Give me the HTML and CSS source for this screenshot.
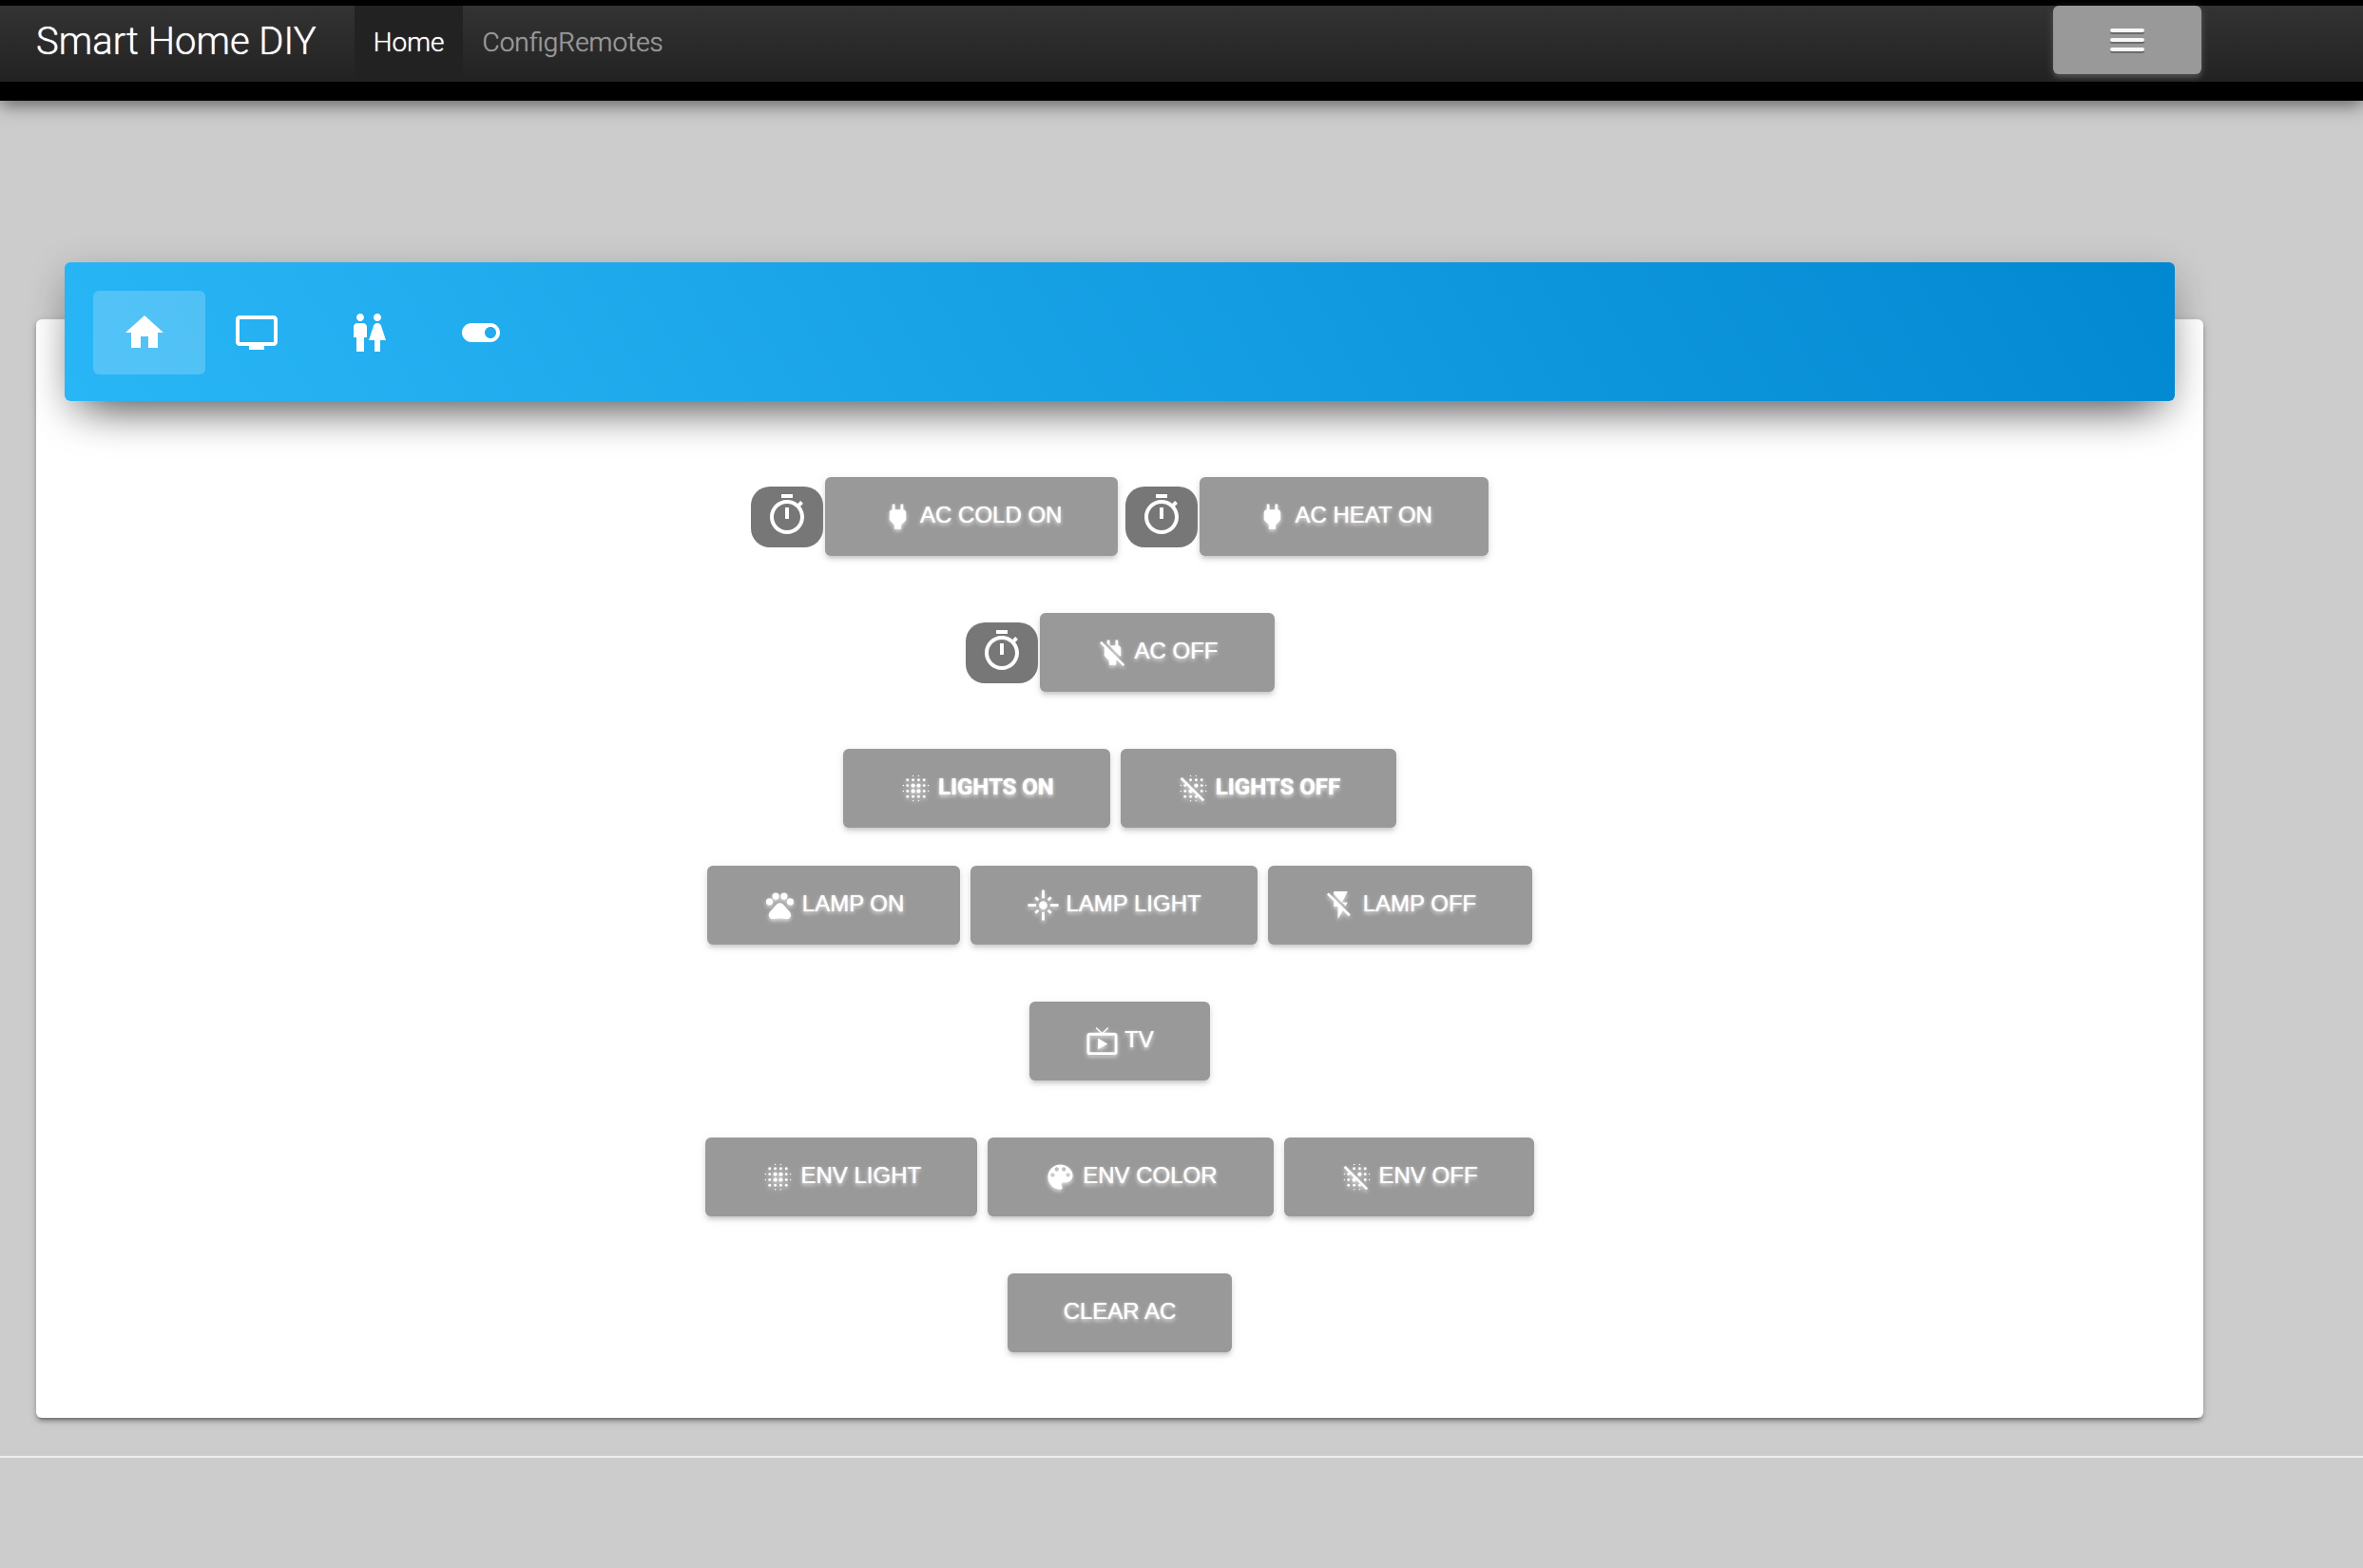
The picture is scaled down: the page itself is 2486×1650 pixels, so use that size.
FILE: index.html
```html
<!DOCTYPE html>
<html lang="en">
<head>
<meta charset="utf-8">
<title>Smart Home DIY</title>
<link rel="stylesheet" href="styles.css">
</head>
<body>
<svg class="sprite" aria-hidden="true">
  <symbol id="timer" viewBox="0 0 24 24"><path d="M15 1H9v2h6V1zm-4 13h2V8h-2v6zm8.03-6.61l1.42-1.42c-.43-.51-.9-.99-1.41-1.41l-1.42 1.42C16.07 4.74 14.12 4 12 4c-4.97 0-9 4.03-9 9s4.02 9 9 9 9-4.03 9-9c0-2.12-.74-4.07-1.97-5.61zM12 20c-3.87 0-7-3.13-7-7s3.13-7 7-7 7 3.13 7 7-3.13 7-7 7z"/></symbol>
  <symbol id="power" viewBox="0 0 24 24"><path d="M16.01 7L16 3h-2v4h-4V3H8v4h-.01C7 6.99 6 7.99 6 8.99v5.49L9.5 18v3h5v-3l3.5-3.51v-5.5c0-1-1-2-1.99-1.99z"/></symbol>
  <symbol id="blur-on" viewBox="0 0 24 24">
    <g><circle cx="10" cy="10" r="1.5"/><circle cx="14" cy="10" r="1.5"/><circle cx="10" cy="14" r="1.5"/><circle cx="14" cy="14" r="1.5"/></g>
    <g><circle cx="6" cy="6" r="1"/><circle cx="10" cy="6" r="1"/><circle cx="14" cy="6" r="1"/><circle cx="18" cy="6" r="1"/><circle cx="6" cy="10" r="1"/><circle cx="18" cy="10" r="1"/><circle cx="6" cy="14" r="1"/><circle cx="18" cy="14" r="1"/><circle cx="6" cy="18" r="1"/><circle cx="10" cy="18" r="1"/><circle cx="14" cy="18" r="1"/><circle cx="18" cy="18" r="1"/></g>
    <g><circle cx="10" cy="3" r=".5"/><circle cx="14" cy="3" r=".5"/><circle cx="3" cy="10" r=".5"/><circle cx="3" cy="14" r=".5"/><circle cx="21" cy="10" r=".5"/><circle cx="21" cy="14" r=".5"/><circle cx="10" cy="21" r=".5"/><circle cx="14" cy="21" r=".5"/></g>
  </symbol>
  <symbol id="blur-off" viewBox="0 0 24 24">
    <path d="M3.77 4L2.5 5.27 18.73 21.5 20 20.23z"/>
    <g><circle cx="14" cy="10" r="1.5"/><circle cx="10" cy="14" r="1.5"/></g>
    <g><circle cx="10" cy="6" r="1"/><circle cx="14" cy="6" r="1"/><circle cx="18" cy="6" r="1"/><circle cx="6" cy="10" r="1"/><circle cx="18" cy="10" r="1"/><circle cx="6" cy="14" r="1"/><circle cx="18" cy="14" r="1"/><circle cx="6" cy="18" r="1"/><circle cx="10" cy="18" r="1"/><circle cx="14" cy="18" r="1"/></g>
    <g><circle cx="10" cy="3" r=".5"/><circle cx="14" cy="3" r=".5"/><circle cx="3" cy="10" r=".5"/><circle cx="3" cy="14" r=".5"/><circle cx="21" cy="10" r=".5"/><circle cx="21" cy="14" r=".5"/><circle cx="10" cy="21" r=".5"/><circle cx="14" cy="21" r=".5"/></g>
  </symbol>
</svg>

<nav class="navbar">
  <a class="brand" href="#">Smart Home DIY</a>
  <a class="nav-link active" href="#" aria-current="page">Home</a>
  <a class="nav-link" href="#">ConfigRemotes</a>
  <button class="toggler" type="button" aria-label="Toggle navigation"><span class="bar"></span><span class="bar"></span><span class="bar"></span></button>
</nav>

<main class="card">
  <div class="tabs">
    <button class="tab selected" type="button" aria-label="Home"><svg viewBox="0 0 24 24"><path d="M10 20v-6h4v6h5v-8h3L12 3 2 12h3v8z"/></svg></button>
    <button class="tab" type="button" aria-label="TV"><svg viewBox="0 0 24 24"><path d="M21 3H3c-1.1 0-2 .9-2 2v12c0 1.1.9 2 2 2h5v2h8v-2h5c1.1 0 1.99-.9 1.99-2L23 5c0-1.1-.9-2-2-2zm0 14H3V5h18v12z"/></svg></button>
    <button class="tab" type="button" aria-label="Bathroom"><svg viewBox="0 0 24 24"><path d="M5.5 22v-7.5H4V9c0-1.1.9-2 2-2h3c1.1 0 2 .9 2 2v5.5H9.5V22h-4zM18 22v-6h3l-2.54-7.63C18.18 7.55 17.42 7 16.56 7h-.12c-.86 0-1.63.55-1.9 1.37L12 16h3v6h3zM7.5 6c1.11 0 2-.89 2-2s-.89-2-2-2-2 .89-2 2 .89 2 2 2zm9 0c1.11 0 2-.89 2-2s-.89-2-2-2-2 .89-2 2 .89 2 2 2z"/></svg></button>
    <button class="tab" type="button" aria-label="Switches"><svg viewBox="0 0 24 24"><path d="M17 7H7c-2.76 0-5 2.24-5 5s2.24 5 5 5h10c2.76 0 5-2.24 5-5s-2.24-5-5-5zm0 8c-1.66 0-3-1.34-3-3s1.34-3 3-3 3 1.34 3 3-1.34 3-3 3z"/></svg></button>
  </div>

  <div class="controls">
    <div class="row timed">
      <div class="pair">
        <button class="timer" type="button" aria-label="AC cold timer"><svg><use href="#timer"/></svg></button>
        <button class="btn" type="button"><svg><use href="#power"/></svg>AC COLD ON</button>
      </div>
      <div class="pair">
        <button class="timer" type="button" aria-label="AC heat timer"><svg><use href="#timer"/></svg></button>
        <button class="btn" type="button"><svg><use href="#power"/></svg>AC HEAT ON</button>
      </div>
    </div>
    <div class="row timed">
      <div class="pair">
        <button class="timer" type="button" aria-label="AC off timer"><svg><use href="#timer"/></svg></button>
        <button class="btn" type="button"><svg viewBox="0 0 24 24"><path d="M18 14.49V9c0-1-1.01-2.01-2-2V3h-2v4h-4V3H8v2.48l9.51 9.5.49-.49zm-1.76 1.77L7.2 7.2l-.01.01L3.98 4 2.71 5.25l3.36 3.36C6.04 8.74 6 8.87 6 9v5.48L9.5 18v3h5v-3l.48-.48L19.45 22l1.26-1.28-4.47-4.46z"/></svg>AC OFF</button>
      </div>
    </div>
    <div class="row-group">
      <div class="row">
        <button class="btn strong" type="button"><svg><use href="#blur-on"/></svg>LIGHTS ON</button>
        <button class="btn strong" type="button"><svg><use href="#blur-off"/></svg>LIGHTS OFF</button>
      </div>
      <div class="row">
        <button class="btn" type="button"><svg viewBox="0 0 24 24"><circle cx="4.5" cy="9.5" r="2.5"/><circle cx="9" cy="5.5" r="2.5"/><circle cx="15" cy="5.5" r="2.5"/><circle cx="19.5" cy="9.5" r="2.5"/><path d="M17.34 14.86c-.87-1.02-1.6-1.89-2.48-2.91-.46-.54-1.05-1.08-1.75-1.32-.11-.04-.22-.07-.33-.09-.25-.04-.52-.04-.78-.04s-.53 0-.79.05c-.11.02-.22.05-.33.09-.7.24-1.28.78-1.75 1.32-.87 1.02-1.6 1.89-2.48 2.91-1.31 1.31-2.92 2.76-2.62 4.79.29 1.02 1.02 2.03 2.33 2.32.73.15 3.06-.44 5.54-.44h.18c2.48 0 4.81.58 5.54.44 1.31-.29 2.04-1.31 2.33-2.32.31-2.04-1.3-3.49-2.61-4.8z"/></svg>LAMP ON</button>
        <button class="btn" type="button"><svg viewBox="0 0 24 24"><path d="M7 11H1v2h6v-2zm2.17-3.24L7.05 5.64 5.64 7.05l2.12 2.12 1.41-1.41zM13 1h-2v6h2V1zm5.36 6.05l-1.41-1.41-2.12 2.12 1.41 1.41 2.12-2.12zM17 11v2h6v-2h-6zm-5-2c-1.66 0-3 1.34-3 3s1.34 3 3 3 3-1.34 3-3-1.34-3-3-3zm2.83 7.24l2.12 2.12 1.41-1.41-2.12-2.12-1.41 1.41zm-9.19.71l1.41 1.41 2.12-2.12-1.41-1.41-2.12 2.12zM11 23h2v-6h-2v6z"/></svg>LAMP LIGHT</button>
        <button class="btn" type="button"><svg viewBox="0 0 24 24"><path d="M3.27 3L2 4.27l5 5V13h3v9l3.58-6.14L17.73 20 19 18.73 3.27 3zM17 10h-4l4-8H7v2.18l8.46 8.46L17 10z"/></svg>LAMP OFF</button>
      </div>
    </div>
    <div class="row">
      <button class="btn" type="button"><svg viewBox="0 0 24 24"><path d="M21 6h-7.59l3.29-3.29L16 2l-4 4-4-4-.7.71L10.59 6H3c-1.1 0-2 .89-2 2v12c0 1.1.9 2 2 2h18c1.1 0 2-.9 2-2V8c0-1.11-.9-2-2-2zm0 14H3V8h18v12zM9 10v8l7-4z"/></svg>TV</button>
    </div>
    <div class="row">
      <button class="btn" type="button"><svg><use href="#blur-on"/></svg>ENV LIGHT</button>
      <button class="btn" type="button"><svg viewBox="0 0 24 24"><path d="M12 3c-4.97 0-9 4.03-9 9s4.03 9 9 9c.83 0 1.5-.67 1.5-1.5 0-.39-.15-.74-.39-1.01-.23-.26-.38-.61-.38-.99 0-.83.67-1.5 1.5-1.5H16c2.76 0 5-2.24 5-5 0-4.42-4.03-8-9-8zm-5.5 9c-.83 0-1.5-.67-1.5-1.5S5.67 9 6.5 9 8 9.67 8 10.5 7.33 12 6.5 12zm3-4C8.67 8 8 7.33 8 6.5S8.67 5 9.5 5s1.5.67 1.5 1.5S10.33 8 9.5 8zm5 0c-.83 0-1.5-.67-1.5-1.5S13.67 5 14.5 5s1.5.67 1.5 1.5S15.33 8 14.5 8zm3 4c-.83 0-1.5-.67-1.5-1.5S16.67 9 17.5 9s1.5.67 1.5 1.5-.67 1.5-1.5 1.5z"/></svg>ENV COLOR</button>
      <button class="btn" type="button"><svg><use href="#blur-off"/></svg>ENV OFF</button>
    </div>
    <div class="row">
      <button class="btn" type="button">CLEAR AC</button>
    </div>
  </div>
</main>
<hr class="divider">
</body>
</html>
```
FILE: styles.css
```css
* {
  box-sizing: border-box;
}

body {
  margin: 0;
  background: #ccc;
  font-family: Roboto, "Liberation Sans", sans-serif;
}

button {
  border: 0;
  padding: 0;
  font: inherit;
  color: #fff;
  cursor: pointer;
}

svg {
  display: block;
  flex: none;
  fill: currentColor;
}

.sprite {
  position: absolute;
  width: 0;
  height: 0;
}

/* Top bar */
.navbar {
  display: flex;
  align-items: flex-start;
  padding: 0 170px 0 38px;
  border-top: 6px solid #000;
  border-bottom: 20px solid #000;
  background: linear-gradient(#333, #222);
  box-shadow: 0 4px 18px rgba(0, 0, 0, 0.55);
}

.brand {
  padding: 2px 40px 0 0;
  font-size: 40px;
  font-weight: 300;
  line-height: 72px;
  color: #fff;
  text-decoration: none;
  text-shadow: 0 0 1px currentColor;
}

.nav-link {
  padding: 1px 20px 3px;
  font-size: 28px;
  font-weight: 300;
  line-height: 76px;
  color: #999;
  text-decoration: none;
  text-shadow: 0 0 1px currentColor;
}

.nav-link.active {
  background: #222;
  color: #fff;
}

.toggler {
  display: flex;
  flex-direction: column;
  align-items: center;
  gap: 6px;
  width: 156px;
  height: 72px;
  margin-left: auto;
  padding-top: 24px;
  border-radius: 6px;
  background: #999;
  box-shadow: 0 4px 4px rgba(153, 153, 153, 0.2), 0 2px 10px rgba(153, 153, 153, 0.3);
}

.bar {
  width: 36px;
  height: 4px;
  border-radius: 2px;
  background: #f8f8f8;
  box-shadow: 0 2px 0 #6b6b6b;
}

/* Card with raised tab strip */
.card {
  display: flow-root;
  margin: 230px 168px 40px 38px;
  padding: 0 30px 69px;
  border-radius: 6px;
  background: #fff;
  box-shadow: 0 4px 4px rgba(0, 0, 0, 0.2), 0 6px 2px -4px rgba(0, 0, 0, 0.2), 0 2px 10px rgba(0, 0, 0, 0.15);
}

.tabs {
  display: flex;
  margin-top: -60px;
  padding: 30px 30px 28px;
  border-radius: 6px;
  background: linear-gradient(60deg, #29b6f6, #0288d1);
  box-shadow: 0 10px 40px rgba(0, 0, 0, 0.2), 0 26px 48px -22px rgba(0, 0, 0, 0.65);
}

.tab {
  padding: 20px 40px 20px 30px;
  border-radius: 6px;
  background: transparent;
}

.tab.selected {
  background: rgba(255, 255, 255, 0.2);
}

.tab svg {
  width: 48px;
  height: 48px;
}

/* Remote buttons */
.controls {
  display: flex;
  flex-direction: column;
  gap: 60px;
  padding-top: 80px;
}

.row-group {
  display: flex;
  flex-direction: column;
  gap: 40px;
}

.row {
  display: flex;
  justify-content: center;
  gap: 11px;
}

.row.timed {
  gap: 8px;
}

.pair {
  display: flex;
  align-items: center;
  gap: 2px;
}

.timer {
  padding: 6px 14px 10px;
  border-radius: 20px;
  background: #777;
}

.timer svg {
  width: 48px;
  height: 48px;
}

.btn {
  display: flex;
  align-items: center;
  gap: 6px;
  height: 83px;
  padding: 0 59px 4px;
  border-radius: 6px;
  background: #999;
  font-family: "Liberation Sans", Arial, sans-serif;
  font-size: 24px;
  text-shadow: 0 0 1px #fff, 0 2px 4px rgba(255, 255, 255, 0.8);
  box-shadow: 0 4px 4px rgba(153, 153, 153, 0.25), 0 6px 2px -4px rgba(153, 153, 153, 0.2), 0 2px 10px rgba(153, 153, 153, 0.2);
}

.btn.strong {
  font-family: Roboto, sans-serif;
  font-weight: 700;
}

.btn svg {
  width: 35px;
  height: 35px;
  margin-top: 3px;
  filter: drop-shadow(0 2px 2px rgba(255, 255, 255, 0.7));
}

.divider {
  height: 2px;
  margin: 0;
  border: 0;
  background: #eee;
}
```
